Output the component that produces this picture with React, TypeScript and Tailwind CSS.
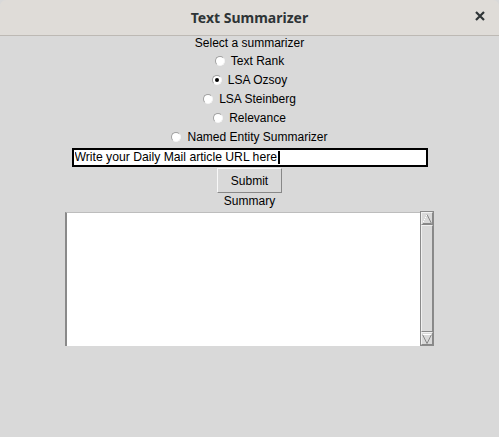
import { useState } from "react";

const options = [
  "Text Rank",
  "LSA Ozsoy",
  "LSA Steinberg",
  "Relevance",
  "Named Entity Summarizer",
];

function Radio({ checked }: { checked: boolean }) {
  return (
    <span className="relative inline-block w-[10px] h-[10px] rounded-full bg-white border border-[#a0a0a0] border-r-[#f4f4f4] border-b-[#f4f4f4] mr-[6px]">
      {checked && (
        <span className="absolute left-[2px] top-[2px] w-[4px] h-[4px] rounded-full bg-black" />
      )}
    </span>
  );
}

export default function App() {
  const [selected, setSelected] = useState("LSA Ozsoy");
  const [url, setUrl] = useState("Write your Daily Mail article URL here");

  return (
    <div className="w-[499px] h-[437px] bg-[#d9d9d9] flex flex-col font-['Liberation_Sans',Arial,sans-serif] text-[12px] text-black overflow-hidden">
      {/* barra de título */}
      <div className="h-[36px] shrink-0 bg-[#dfdcd8] border-b border-[#bdb9b4] rounded-t-[6px] flex items-center relative">
        <div className="flex-1 text-center font-['Noto_Sans',sans-serif] font-bold text-[14px] text-[#2e3436] -mt-[1px]">
          Text Summarizer
        </div>
        <div className="absolute right-[12px] top-[9px]">
          <svg width="14" height="14" viewBox="0 0 14 14">
            <path d="M3 3 L11 11 M11 3 L3 11" stroke="#2e3436" strokeWidth="2.2" />
          </svg>
        </div>
      </div>

      <div className="flex flex-col items-center">
        <div className="h-[15px] leading-[15px]">Select a summarizer</div>
        {options.map((o) => (
          <label
            key={o}
            className="h-[19px] flex items-center cursor-default"
            onClick={() => setSelected(o)}
          >
            <Radio checked={selected === o} />
            <span>{o}</span>
          </label>
        ))}
        <div className="mt-[2px] w-[356px] h-[19px] bg-white border-2 border-black pl-[1px] flex items-center">
          <input
            value={url}
            onChange={(e) => setUrl(e.target.value)}
            className="w-[203px] bg-transparent text-[12.2px] outline-none p-0 font-['Liberation_Sans',Arial,sans-serif]"
          />
          <span className="w-[2px] h-[13px] bg-black" />
        </div>
        <button className="mt-[1px] w-[65px] h-[25px] bg-[#d9d9d9] border border-[#f8f8f8] border-r-[#888] border-b-[#888] text-[12px]">
          Submit
        </button>
        <div className="h-[16px] leading-[16px]">Summary</div>
        <div className="mt-[3px] flex">
          <div className="w-[355px] h-[134px] bg-white border-l-2 border-t border-l-[#8a8a8a] border-t-[#bdbdbd]" />
          <div className="w-[14px] h-[135px] bg-[#c3c3c3] border border-[#8a8a8a] flex flex-col -mt-[1px]">
            <div className="h-[13px] bg-[#d9d9d9] flex items-center justify-center border border-[#f0f0f0] border-r-[#888] border-b-[#888]">
              <svg width="10" height="10" viewBox="0 0 10 10">
                <path d="M5 0.5 L9.5 9.5 L0.5 9.5 Z" fill="#d9d9d9" stroke="#888" strokeWidth="1" />
                <path d="M5 0.5 L0.5 9.5" stroke="#fff" strokeWidth="1" />
              </svg>
            </div>
            <div className="flex-1 bg-[#d9d9d9] border border-[#f0f0f0] border-r-[#888] border-b-[#888]" />
            <div className="h-[13px] bg-[#d9d9d9] flex items-center justify-center border border-[#f0f0f0] border-r-[#888] border-b-[#888]">
              <svg width="10" height="10" viewBox="0 0 10 10">
                <path d="M0.5 0.5 L9.5 0.5 L5 9.5 Z" fill="#d9d9d9" stroke="#888" strokeWidth="1" />
                <path d="M0.5 0.5 L9.5 0.5" stroke="#fff" strokeWidth="1" />
              </svg>
            </div>
          </div>
        </div>
      </div>
    </div>
  );
}
